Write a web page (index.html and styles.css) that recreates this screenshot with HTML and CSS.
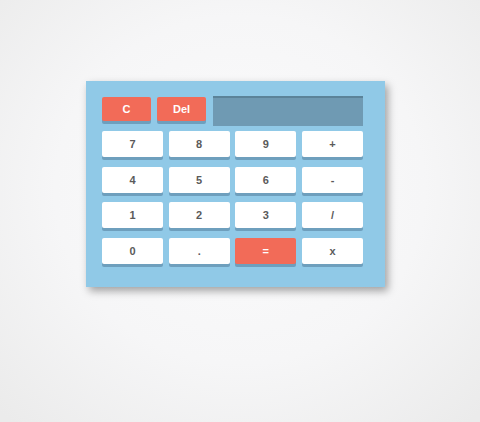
FILE: index.html
```html
<!DOCTYPE html>
<html>
<head>
<meta charset="utf-8">
<link rel="stylesheet" href="styles.css">
</head>
<body>
<div class="calc">
  <div class="top-row">
    <button class="key red small">C</button>
    <button class="key red small">Del</button>
    <div class="display"></div>
  </div>
  <div class="grid">
    <button class="key">7</button>
    <button class="key">8</button>
    <button class="key">9</button>
    <button class="key">+</button>
    <button class="key">4</button>
    <button class="key">5</button>
    <button class="key">6</button>
    <button class="key">-</button>
    <button class="key">1</button>
    <button class="key">2</button>
    <button class="key">3</button>
    <button class="key">/</button>
    <button class="key">0</button>
    <button class="key">.</button>
    <button class="key red">=</button>
    <button class="key">x</button>
  </div>
</div>
</body>
</html>
```
FILE: styles.css
```css
html, body {
  margin: 0;
  height: 100%;
}
body {
  width: 480px;
  height: 422px;
  background: radial-gradient(ellipse 70% 75% at 50% 45%, #fbfbfc 0%, #f6f6f7 55%, #ebebeb 100%);
  padding: 81px 0 0 86px;
  box-sizing: border-box;
  font-family: "Liberation Sans", Arial, sans-serif;
}
.calc {
  width: 299px;
  height: 206px;
  box-sizing: border-box;
  padding: 15px 22px 0 16px;
  background: #90c9e7;
  box-shadow: 3px 4px 8px rgba(0, 0, 0, 0.35);
}
.top-row {
  display: flex;
  align-items: flex-start;
  gap: 6px;
  margin-bottom: 5px;
}
.key {
  border: none;
  margin: 0;
  padding: 0;
  height: 26px;
  border-radius: 2px;
  background: #ffffff;
  color: #5a5a5a;
  font-family: "Liberation Sans", Arial, sans-serif;
  font-weight: bold;
  font-size: 11px;
  box-shadow: 0 3px 0 #6e9fbd;
  display: flex;
  align-items: center;
  justify-content: center;
}
.key.red {
  background: #f26b58;
  color: #ffffff;
}
.key.small {
  width: 49px;
  margin-top: 1px;
  height: 24px;
}
.display {
  width: 150px;
  height: 30px;
  margin-left: 1px;
  box-sizing: border-box;
  background: #6f9ab3;
  border-top: 2px solid #5b8399;
}
.grid {
  display: grid;
  grid-template-columns: repeat(4, 61px);
  grid-auto-rows: 26px;
  column-gap: 5.67px;
  row-gap: 9.5px;
}
```
